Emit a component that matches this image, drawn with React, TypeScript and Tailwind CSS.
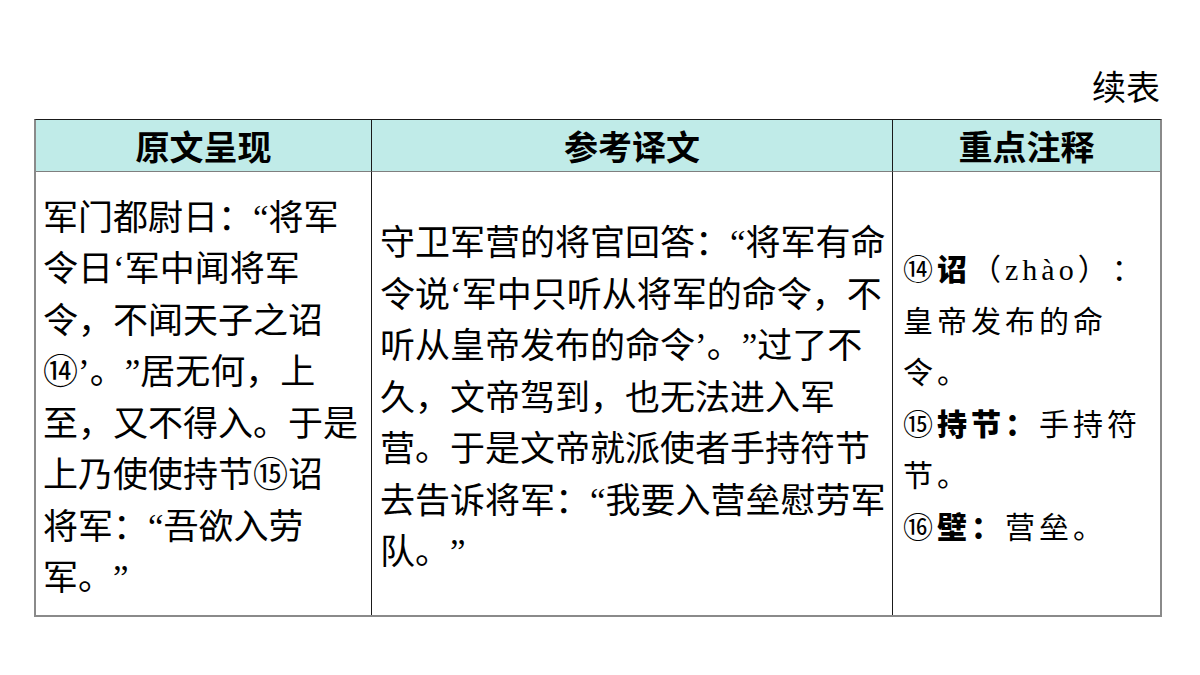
const bodyFont = {
  fontFamily: '"Liberation Serif", "Noto Sans CJK SC", sans-serif',
};

const original = [
  "军门都尉日：“将军",
  "令日‘军中闻将军",
  "令，不闻天子之诏",
  "⑭’。”居无何，上",
  "至，又不得入。于是",
  "上乃使使持节⑮诏",
  "将军：“吾欲入劳",
  "军。”",
];

const translation = [
  "守卫军营的将官回答：“将军有命",
  "令说‘军中只听从将军的命令，不",
  "听从皇帝发布的命令’。”过了不",
  "久，文帝驾到，也无法进入军",
  "营。于是文帝就派使者手持符节",
  "去告诉将军：“我要入营垒慰劳军",
  "队。”",
];

function HeaderCell({ label, divider }: { label: string; divider?: boolean }) {
  return (
    <div
      className={`flex h-[52px] items-center justify-center border-b border-[#7f7f7f] bg-[#c0ebe8] text-[34px] font-bold text-black ${
        divider ? "border-l border-l-[#1a1a1a]" : ""
      }`}
      style={{ fontFamily: '"Noto Sans CJK SC", sans-serif' }}
    >
      {label}
    </div>
  );
}

function Lines({ lines }: { lines: string[] }) {
  return (
    <div
      className="text-[35px] leading-[51.5px] text-black [text-spacing-trim:space-all]"
      style={bodyFont}
    >
      {lines.map((line) => (
        <div key={line} className="whitespace-nowrap">
          {line}
        </div>
      ))}
    </div>
  );
}

export default function App() {
  return (
    <div className="h-[675px] w-[1200px] bg-white pt-[66px]">
      <div
        className="h-[40px] pr-[40px] text-right text-[34px] leading-[40px] text-black"
        style={{ fontFamily: '"Noto Sans CJK SC", sans-serif' }}
      >
        续表
      </div>
      <div className="ml-[34px] mt-[13px] w-[1128px] border-x-2 border-t border-b-2 border-x-[#8a8a8a] border-t-[#1a1a1a] border-b-[#8a8a8a]">
        <div className="grid grid-cols-[335px_521px_268px]">
          <HeaderCell label="原文呈现" />
          <HeaderCell label="参考译文" divider />
          <HeaderCell label="重点注释" divider />

          <div className="flex h-[443px] items-center px-[7px] pt-[10px]">
            <Lines lines={original} />
          </div>
          <div className="flex h-[443px] items-center border-l border-[#1a1a1a] px-[8px] pt-[10px]">
            <Lines lines={translation} />
          </div>
          <div className="flex h-[443px] items-center border-l border-[#1a1a1a] px-[10px] pt-[10px]">
            <div
              className="text-[30px] leading-[51.5px] tracking-[4px] text-black [text-spacing-trim:space-all]"
              style={bodyFont}
            >
              <div className="whitespace-nowrap">
                ⑭<b className="font-black">诏</b>（zhào）：
              </div>
              <div className="whitespace-nowrap">皇帝发布的命</div>
              <div className="whitespace-nowrap">令。</div>
              <div className="whitespace-nowrap">
                ⑮<b className="font-black">持节：</b>手持符
              </div>
              <div className="whitespace-nowrap">节。</div>
              <div className="whitespace-nowrap">
                ⑯<b className="font-black">壁：</b>营垒。
              </div>
            </div>
          </div>
        </div>
      </div>
    </div>
  );
}
